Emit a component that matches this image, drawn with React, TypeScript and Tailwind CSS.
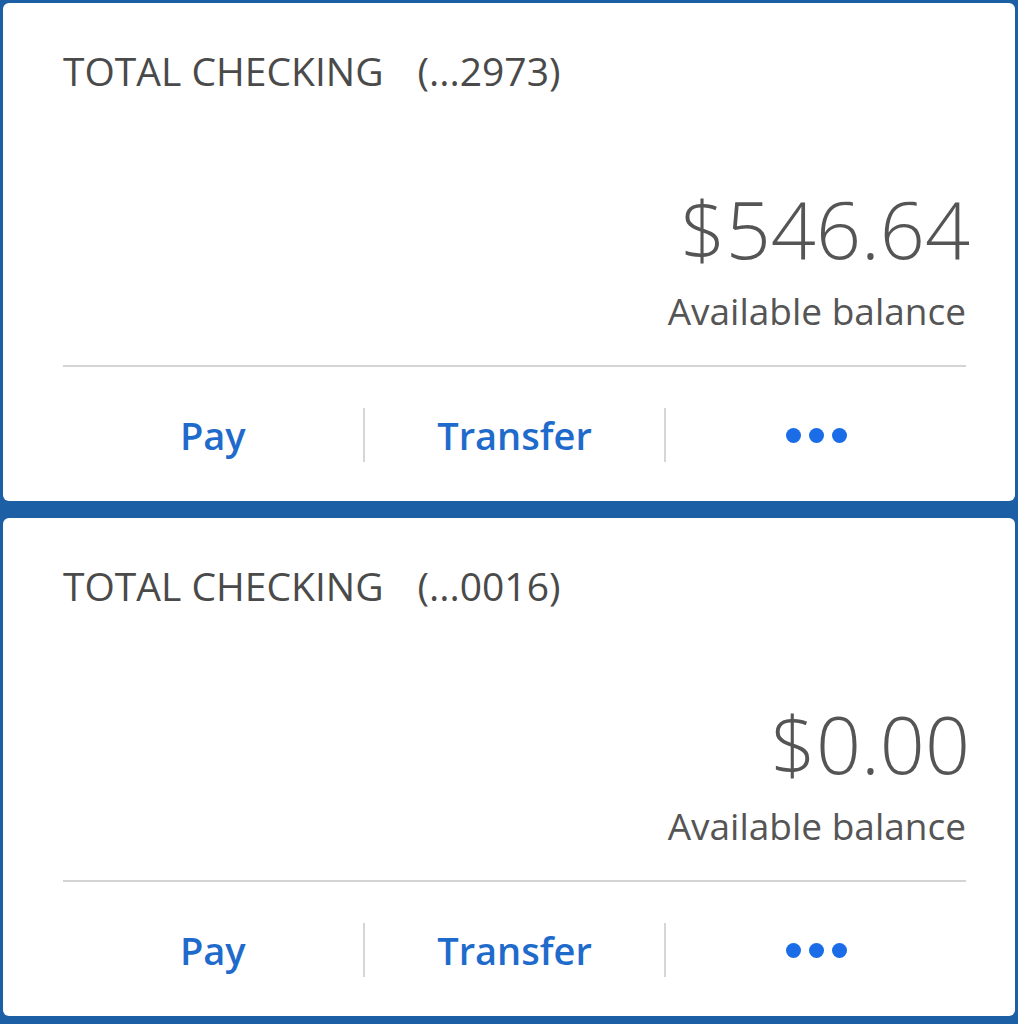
const accounts = [
  { name: 'TOTAL CHECKING', mask: '(...2973)', balance: '$546.64' },
  { name: 'TOTAL CHECKING', mask: '(...0016)', balance: '$0.00' },
]

function AccountCard(props: { name: string; mask: string; balance: string }) {
  return (
    <div className="rounded-[6px] bg-white pl-[60px] pr-[49px] pt-[48px]">
      <div className="flex text-[39px] leading-none text-[#4a4a4a]">
        <span>{props.name}</span>
        <span className="ml-[34px]">{props.mask}</span>
      </div>
      <div className="-mr-[4px] mt-[99px] text-right text-[79px] font-light leading-none text-[#555]">
        {props.balance}
      </div>
      <div className="mt-[24px] text-right text-[37px] leading-none text-[#555]">
        Available balance
      </div>
      <div className="mt-[36px] h-[2px] bg-[#d4d4d4]" />
      <div className="grid grid-cols-[1fr_auto_1fr_auto_1fr] items-center pb-[39px] pt-[41px] text-[38px] font-semibold leading-none text-[#1f6bcc]">
        <button className="text-center">Pay</button>
        <div className="h-[54px] w-[2px] bg-[#d6d6d6]" />
        <button className="text-center">Transfer</button>
        <div className="h-[54px] w-[2px] bg-[#d6d6d6]" />
        <button className="flex justify-center gap-[8px]">
          <span className="h-[15px] w-[15px] rounded-full bg-[#1a6de6]" />
          <span className="h-[15px] w-[15px] rounded-full bg-[#1a6de6]" />
          <span className="h-[15px] w-[15px] rounded-full bg-[#1a6de6]" />
        </button>
      </div>
    </div>
  )
}

export default function App() {
  return (
    <div
      className="flex min-h-screen flex-col gap-[17px] bg-[#1c5fa5] px-[3px] pb-[6px] pt-[3px]"
      style={{ fontFamily: '"Open Sans", "Liberation Sans", sans-serif' }}
    >
      {accounts.map((account) => (
        <AccountCard key={account.mask} {...account} />
      ))}
    </div>
  )
}
